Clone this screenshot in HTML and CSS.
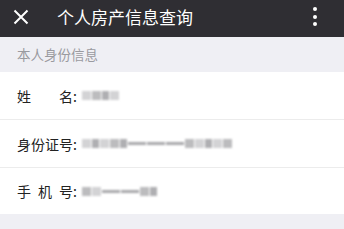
FILE: index.html
```html
<!DOCTYPE html>
<html lang="zh-CN">
<head>
    <meta charset="UTF-8">
    <meta name="viewport" content="width=device-width, initial-scale=1.0">
    <title>个人房产信息查询</title>
    <link rel="stylesheet" href="styles.css">
</head>
<body>

    <div class="topbar">
        <svg class="close" width="16" height="16" viewBox="0 0 16 16">
            <path d="M1.5 1.5 L14.5 14.5 M14.5 1.5 L1.5 14.5" stroke="#fff" stroke-width="2" fill="none"/>
        </svg>
        <div class="title">个人房产信息查询</div>
        <div class="more">
            <span></span><span></span><span></span>
        </div>
    </div>

    <div class="section-title">本人身份信息</div>

    <div class="list">
        <div class="row">
            <span class="label">姓名</span><span class="colon">:</span>
            <span class="masked">
                <i class="m2"></i><i class="m1"></i><i class="m3"></i><i class="m2"></i>
            </span>
        </div>
        <div class="row">
            <span class="label">身份证号</span><span class="colon">:</span>
            <span class="masked">
                <i class="m2"></i><i class="m3"></i><i class="m2"></i><i class="m1"></i><i class="m3"></i><i class="line"></i><i class="line"></i><i class="line"></i><i class="m1"></i><i class="m2"></i><i class="m3"></i><i class="m2"></i><i class="m1"></i>
            </span>
        </div>
        <div class="row">
            <span class="label">手机号</span><span class="colon">:</span>
            <span class="masked">
                <i class="m1"></i><i class="m2"></i><i class="line"></i><i class="line"></i><i class="m1"></i><i class="m3"></i>
            </span>
        </div>
    </div>

</body>
</html>
```

FILE: styles.css
```css
body {
    margin: 0;
    width: 344px;
    height: 229px;
    overflow: hidden;
    background-color: #efeff4;
    font-family: "Noto Sans CJK SC", "Noto Sans", sans-serif;
}

.topbar {
    height: 37px;
    background-color: #2f2e33;
    display: flex;
    align-items: center;
    color: #fff;
}

.close {
    margin-left: 13px;
    margin-top: -4px;
}

.title {
    margin-left: 28px;
    margin-top: -4px;
    font-size: 17px;
}

.more {
    margin-left: auto;
    margin-right: 27px;
    margin-top: -4px;
    display: flex;
    flex-direction: column;
    gap: 3.5px;
}

.more span {
    width: 4px;
    height: 4px;
    border-radius: 50%;
    background-color: #fff;
}

.section-title {
    height: 35px;
    line-height: 35px;
    padding-left: 17px;
    font-size: 13.5px;
    color: #9a9a9f;
}

.list {
    background-color: #fff;
}

.row {
    height: 47px;
    display: flex;
    align-items: center;
    padding-left: 17px;
    font-size: 14px;
    color: #222;
    border-bottom: 1px solid #ececec;
}

.row:last-child {
    border-bottom: none;
    height: 46px;
}

.label {
    width: 56px;
    text-align: justify;
    text-align-last: justify;
}

.colon {
    width: 9px;
}

.masked {
    display: flex;
    align-items: center;
    height: 12px;
    filter: blur(1.3px);
}

.masked i {
    display: block;
    height: 9px;
    width: 9px;
    margin-right: 1px;
}

.masked .m1 {
    background-color: #bcbcbe;
}

.masked .m2 {
    background-color: #d3d3d5;
}

.masked .m3 {
    background-color: #afafb2;
    width: 7px;
}

.masked .line {
    height: 3px;
    width: 18px;
    background-color: #a8a8ab;
}
```
